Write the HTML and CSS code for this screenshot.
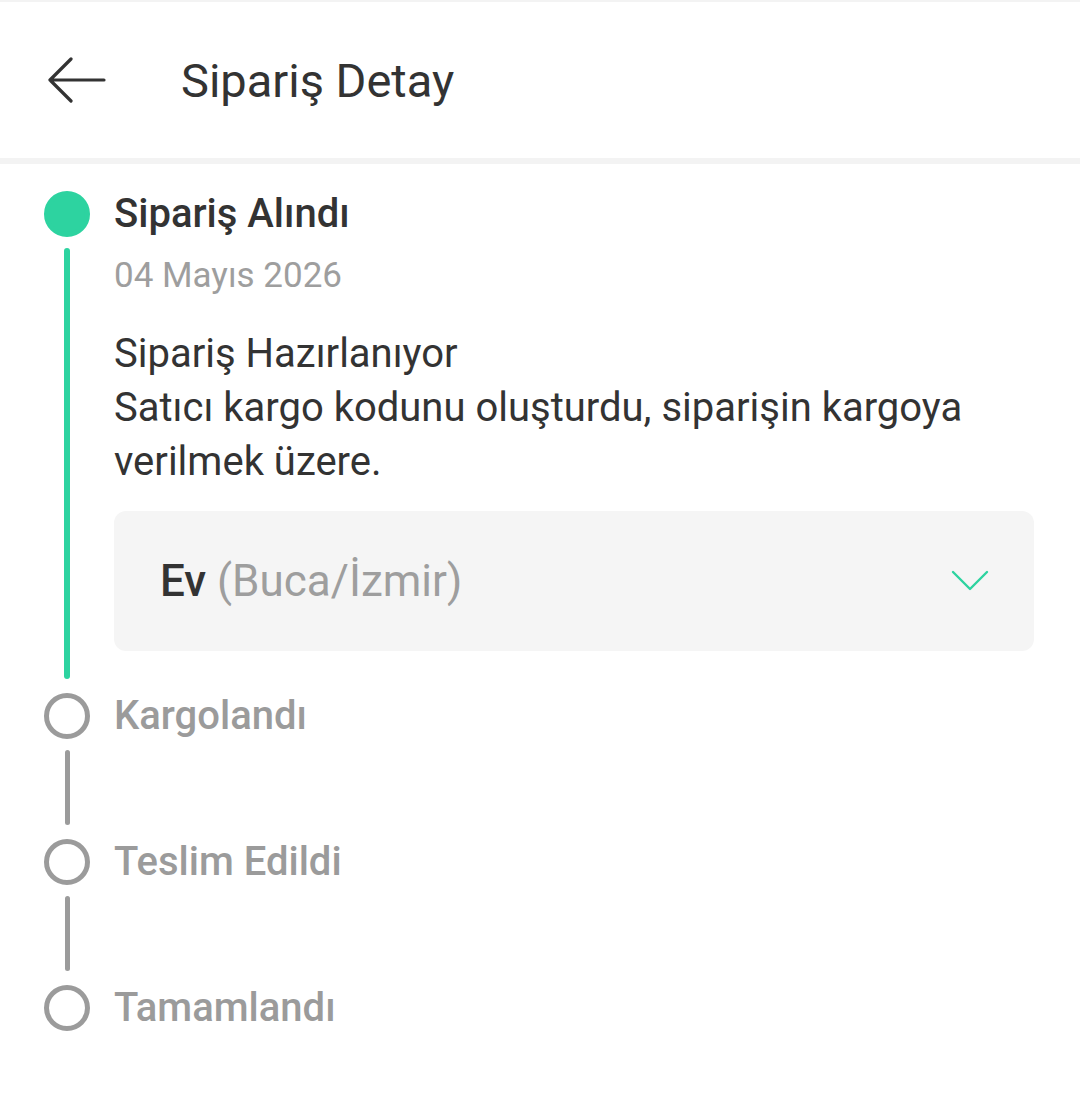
FILE: index.html
```html
<!DOCTYPE html>
<html lang="tr">
<head>
<meta charset="utf-8">
<title>Sipariş Detay</title>
<link rel="stylesheet" href="styles.css">
</head>
<body>
<div class="page">
  <header class="topbar">
    <svg class="back" viewBox="0 0 60 46" width="60" height="46" aria-hidden="true">
      <path d="M58 23H4M25 2L4 23L25 44" fill="none" stroke="#333" stroke-width="3.2" stroke-linecap="round" stroke-linejoin="round"/>
    </svg>
    <h1 class="title">Sipariş Detay</h1>
  </header>
  <div class="divider"></div>

  <main class="timeline">
    <section class="step done">
      <span class="dot"></span>
      <h2 class="step-title">Sipariş Alındı</h2>
      <div class="rail"><span class="bar"></span></div>
      <div class="step-body">
        <p class="date">04 Mayıs 2026</p>
        <p class="desc">Sipariş Hazırlanıyor<br>Satıcı kargo kodunu oluşturdu, siparişin kargoya verilmek üzere.</p>
        <div class="address">
          <span class="addr-text"><b>Ev</b> <span class="addr-city">(Buca/İzmir)</span></span>
          <svg class="chev" viewBox="0 0 40 26" width="40" height="26" aria-hidden="true">
            <path d="M3 4L20 21L37 4" fill="none" stroke="#2dd3a0" stroke-width="2.4" stroke-linecap="round" stroke-linejoin="round"/>
          </svg>
        </div>
      </div>
    </section>

    <section class="step">
      <span class="dot"></span>
      <h2 class="step-title">Kargolandı</h2>
      <div class="rail"><span class="bar"></span></div>
      <div class="step-body spacer"></div>
    </section>

    <section class="step">
      <span class="dot"></span>
      <h2 class="step-title">Teslim Edildi</h2>
      <div class="rail"><span class="bar"></span></div>
      <div class="step-body spacer"></div>
    </section>

    <section class="step last">
      <span class="dot"></span>
      <h2 class="step-title">Tamamlandı</h2>
    </section>
  </main>
</div>
</body>
</html>
```

FILE: styles.css
```css
* { box-sizing: border-box; }
html, body { margin: 0; padding: 0; background: #fff; }
body {
  font-family: Roboto, "Noto Sans", "Liberation Sans", sans-serif;
  color: #333;
}
.page { width: 1080px; }

.topbar {
  height: 158px;
  border-top: 2px solid #f3f3f3;
  display: flex;
  align-items: center;
  padding-left: 46px;
}
.back { display: block; flex: none; }
.title {
  margin: 0 0 0 75px;
  font-size: 47px;
  font-weight: 400;
  color: #333;
  line-height: 1;
}
.divider { height: 6px; background: #f3f3f3; }

.timeline { padding: 27px 46px 0 44px; }

.step {
  display: grid;
  grid-template-columns: 46px 1fr;
  column-gap: 24px;
}
.dot {
  width: 46px;
  height: 46px;
  border-radius: 50%;
  border: 5px solid #9b9b9b;
  background: #fff;
}
.step.done .dot { background: #2dd3a0; border-color: #2dd3a0; }

.step-title {
  margin: 0;
  font-size: 40px;
  line-height: 46px;
  font-weight: 500;
  color: #9b9b9b;
}
.step.done .step-title { color: #333; }

.rail {
  display: flex;
  justify-content: center;
  padding: 11px 0 14px;
}
.bar {
  width: 5px;
  border-radius: 3px;
  background: #9b9b9b;
}
.step.done .bar { width: 6px; background: #2dd3a0; }

.step-body { padding-bottom: 42px; }
.step-body.spacer { height: 100px; padding: 0; }

.date {
  margin: 15px 0 0;
  font-size: 35px;
  line-height: 48px;
  color: #9e9e9e;
}
.desc {
  margin: 27px 0 0;
  font-size: 40px;
  line-height: 54px;
  color: #333;
}
.address {
  margin-top: 22px;
  height: 140px;
  background: #f5f5f5;
  border-radius: 12px;
  display: flex;
  align-items: center;
  justify-content: space-between;
  padding: 0 44px 0 46px;
}
.addr-text { font-size: 44px; color: #333; }
.addr-text b { font-weight: 500; }
.addr-city { color: #9e9e9e; }
.chev { display: block; }
```
